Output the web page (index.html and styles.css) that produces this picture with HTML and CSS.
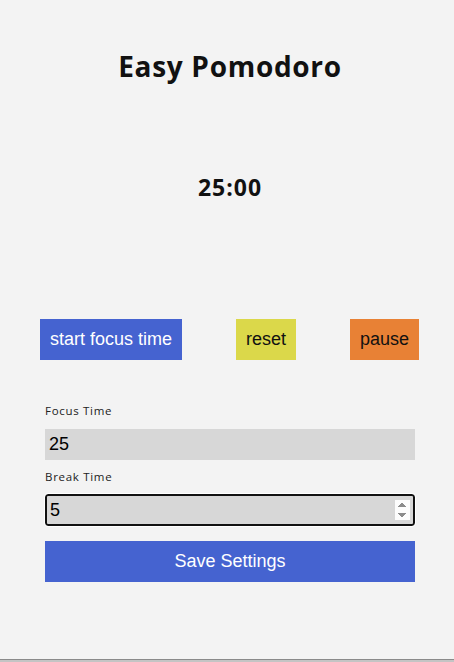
FILE: index.html
```html
<!DOCTYPE html>
<html lang="en">
<head>
<meta charset="utf-8">
<title>Easy Pomodoro</title>
<link rel="stylesheet" href="styles.css">
</head>
<body>
<main class="page">
  <h1 class="title">Easy Pomodoro</h1>
  <div class="timer">25:00</div>
  <div class="controls">
    <button class="btn btn-start">start focus time</button>
    <button class="btn btn-reset">reset</button>
    <button class="btn btn-pause">pause</button>
  </div>
  <form class="settings">
    <label class="label" for="focus">Focus Time</label>
    <input class="field" id="focus" type="number" value="25">
    <label class="label label-break" for="brk">Break Time</label>
    <input class="field field-active" id="brk" type="number" value="5" autofocus>
    <button type="button" class="btn btn-save">Save Settings</button>
  </form>
</main>
<div class="edge"></div>
</body>
</html>
```
FILE: styles.css
```css
html, body {
  margin: 0;
  padding: 0;
  background: #f3f3f3;
}
body {
  height: 662px;
  overflow: hidden;
  display: flex;
  flex-direction: column;
}
.page {
  height: 659px;
  display: flex;
  flex-direction: column;
}
.title {
  margin: 50px 0 0;
  padding-left: 6px;
  font-family: "Open Sans", "Noto Sans", sans-serif;
  font-weight: 700;
  font-size: 28px;
  letter-spacing: 0.7px;
  line-height: 32px;
  text-align: center;
  color: #111;
}
.timer {
  margin-top: 90px;
  padding-left: 6px;
  font-family: "Open Sans", "Noto Sans", sans-serif;
  font-weight: 700;
  font-size: 23px;
  letter-spacing: 1px;
  line-height: 30px;
  text-align: center;
  color: #111;
}
.controls {
  margin-top: 117px;
  display: flex;
  justify-content: space-between;
  padding: 0 35px 0 40px;
}
.btn {
  border: none;
  font-family: "Liberation Sans", Arial, sans-serif;
  font-size: 18px;
  height: 41px;
  padding: 0;
  white-space: nowrap;
  cursor: pointer;
}
.btn-start {
  width: 142px;
  background: #4563d0;
  color: #fff;
}
.btn-reset {
  width: 60px;
  background: #dbd84a;
  color: #111;
}
.btn-pause {
  width: 69px;
  background: #e88135;
  color: #111;
}
.settings {
  margin: 44px 0 0 45px;
  width: 370px;
  display: flex;
  flex-direction: column;
}
.label {
  font-family: "Open Sans", "Noto Sans", sans-serif;
  font-size: 11.5px;
  letter-spacing: 0.7px;
  line-height: 14px;
  color: #222;
  margin-bottom: 11px;
}
.label-break {
  margin-top: 10px;
  margin-bottom: 10px;
}
.field {
  box-sizing: border-box;
  width: 370px;
  height: 31px;
  border: none;
  background: #d7d7d7;
  font-family: "Liberation Sans", Arial, sans-serif;
  font-size: 18px;
  padding: 0 4px;
  color: #000;
}
.field-active {
  height: 32px;
  border: 2px solid #111;
  border-radius: 3px;
  padding: 0 3px;
  outline: 1px solid #fff;
}
.btn-save {
  margin-top: 15px;
  width: 370px;
  background: #4563d0;
  color: #fff;
}
.edge {
  height: 1px;
  background: #8a8a8a;
}
.edge::after {
  content: "";
  display: block;
  height: 2px;
  margin-top: 1px;
  background: #c4c4c4;
}
```
